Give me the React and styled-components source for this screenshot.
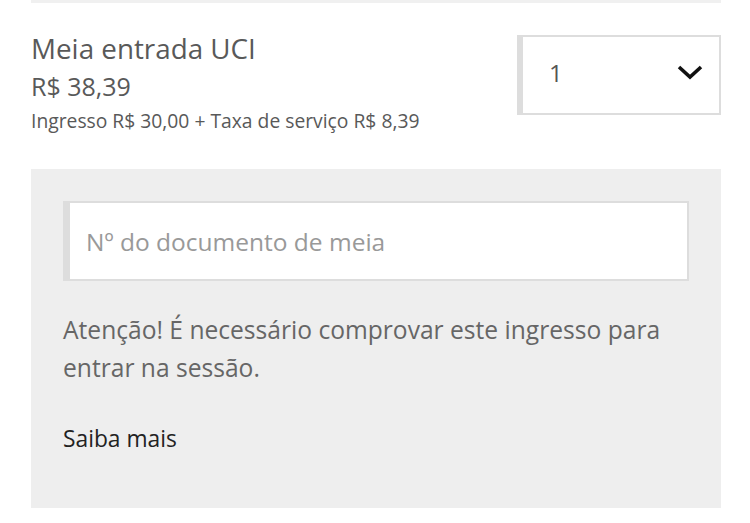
import React from "react";
import styled, { createGlobalStyle } from "styled-components";

const GlobalStyle = createGlobalStyle`
  body {
    margin: 0;
    background: #ffffff;
    font-family: "Open Sans", Lato, sans-serif;
  }
`;

const Page = styled.div`
  width: 690px;
  margin-left: 31px;
  border-top: 3px solid #f0f0f0;
`;

const TicketRow = styled.div`
  display: flex;
  justify-content: space-between;
  align-items: flex-start;
  padding-top: 29px;
`;

const Info = styled.div`
  display: flex;
  flex-direction: column;
  .title {
    font-size: 27.8px;
    line-height: 32px;
    color: #595959;
  }
  .price {
    font-size: 25px;
    line-height: 30px;
    color: #595959;
    margin-top: 7px;
  }
  .detail {
    font-size: 19.3px;
    line-height: 24px;
    color: #595959;
    margin-top: 8px;
  }
`;

const Select = styled.div`
  box-sizing: border-box;
  width: 204px;
  height: 80px;
  margin-top: 3px;
  border: 2px solid #dddddd;
  border-left-width: 6px;
  display: flex;
  align-items: center;
  justify-content: space-between;
  padding: 0 16px 6px 26px;
  font-size: 24px;
  color: #555555;
`;

const Panel = styled.div`
  margin-top: 36px;
  background: #eeeeee;
  padding: 32px 32px 54px;
`;

const DocInput = styled.input`
  box-sizing: border-box;
  width: 100%;
  height: 80px;
  border: 2px solid #dddddd;
  border-left-width: 7px;
  background: #ffffff;
  padding: 0 16px;
  font-family: inherit;
  font-size: 24.5px;
  color: #555555;
  outline: none;
  &::placeholder {
    color: #999999;
  }
`;

const Notice = styled.p`
  margin: 30px 0 0;
  font-size: 24.6px;
  line-height: 38px;
  color: #666666;
`;

const MoreLink = styled.a`
  display: block;
  margin-top: 37px;
  font-size: 22.8px;
  line-height: 30px;
  color: #222222;
  text-decoration: none;
`;

const Chevron = () => (
  <svg width="26" height="16" viewBox="0 0 26 16">
    <path d="M2 3 L13 13 L24 3" fill="none" stroke="#111" strokeWidth="3.6" />
  </svg>
);

const App = () => {
  return (
    <>
      <GlobalStyle />
      <Page>
        <TicketRow>
          <Info>
            <div className="title">Meia entrada UCI</div>
            <div className="price">R$ 38,39</div>
            <div className="detail">Ingresso R$ 30,00 + Taxa de serviço R$ 8,39</div>
          </Info>
          <Select>
            <span>1</span>
            <Chevron />
          </Select>
        </TicketRow>
        <Panel>
          <DocInput placeholder="Nº do documento de meia" />
          <Notice>
            Atenção! É necessário comprovar este ingresso para entrar na sessão.
          </Notice>
          <MoreLink href="#">Saiba mais</MoreLink>
        </Panel>
      </Page>
    </>
  );
};

export default App;
